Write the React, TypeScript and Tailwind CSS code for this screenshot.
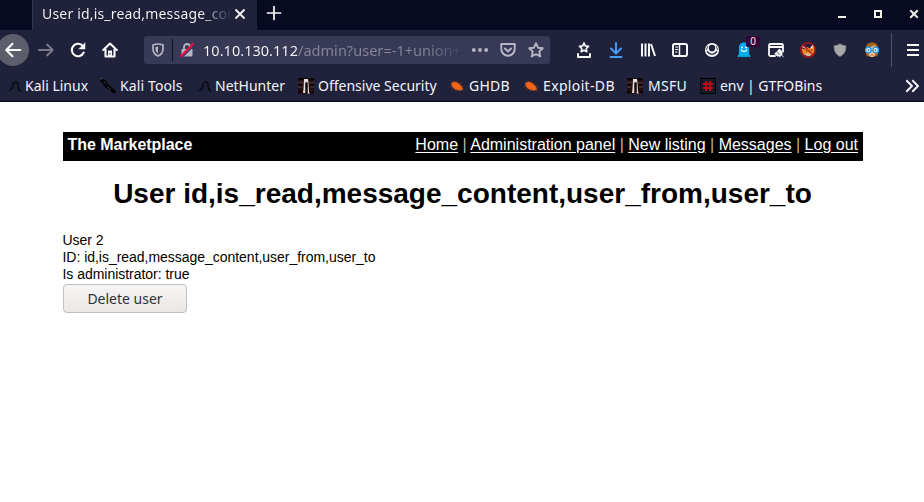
import type { ReactNode } from "react";

function Glyph({ children, size = 16, className = "" }: { children: ReactNode; size?: number; className?: string }) {
  return (
    <svg width={size} height={size} viewBox="0 0 16 16" fill="none" stroke="currentColor" strokeWidth="2" strokeLinecap="round" strokeLinejoin="round" className={`shrink-0 ${className}`}>
      {children}
    </svg>
  );
}

function Cell({ children, className = "text-[#f9f9fa]" }: { children: ReactNode; className?: string }) {
  return <div className={`flex w-8 shrink-0 items-center justify-center ${className}`}>{children}</div>;
}

const starPath = "M8 1.2l2.05 4.5 4.75.55-3.5 3.3.95 4.85L8 12l-4.25 2.4.95-4.85-3.5-3.3 4.75-.55z";

function KaliIcon() {
  return (
    <Glyph>
      <path d="M3.500 12.500c2.200-1 3.200-2.500 3.400-5C7.100 5 8.300 3.800 10 4.100c2 .4 2.500 2.400 2.200 4.400-.2 1.700.5 3 2 4.300" stroke="#0b0e17" strokeWidth="1.900" />
      <path d="M1 13.300l3-1.200M6 5.500l3-1.200" stroke="#15182a" strokeWidth="1" />
    </Glyph>
  );
}

function ToolsIcon() {
  return (
    <Glyph>
      <path d="M.5 1.500l3-.5 2.500 2 1.500 3 3 2 2.500 3 2.500 2-.5 2-3-1-3-3-3-1-2-3-3-3z" fill="#020304" stroke="#08090e" strokeWidth="1" />
      <path d="M4 4l1 1M8 9l2 2M.7 1l2-.3" stroke="#555866" strokeWidth=".8" />
    </Glyph>
  );
}

function StatueIcon() {
  return (
    <Glyph>
      <path d="M0 0h16v16H0z" fill="#220d10" stroke="none" />
      <path d="M0 4.500h5M11 4.500h5M0 9h4M12 9h4" stroke="#4b3134" strokeWidth="1.500" strokeLinecap="butt" />
      <path d="M0 1h16M0 7h4M12 7h4M0 14h3M13 14h3" stroke="#0d0507" strokeWidth="2" strokeLinecap="butt" />
      <path d="M6 1h4l.5 4 .5 9 1 1.500H9.500V4.500h-2V15H5l.5-4z" fill="#e4dfdb" stroke="none" />
      <path d="M7.500 4.500h2V15h-2z" fill="#110a0b" stroke="none" />
    </Glyph>
  );
}

function BugIcon() {
  return (
    <Glyph>
      <path d="M2 5.500l3-2 3.500 1 3.500 3 2.200 3.500-2.700 1.700-5-1L3.300 9z" fill="#f36517" stroke="none" />
      <path d="M4 5L2.500 3M7 5l1-2M10 6l2-1.500M3 8L1 9M5 10l-2 2M8 11l-1 2M12 8l3 .5M13 11l1 2" stroke="#8b3f25" strokeWidth=".7" />
    </Glyph>
  );
}

function HashIcon() {
  return (
    <Glyph>
      <path d="M.5.5h15v15H.5z" fill="#171a29" stroke="#020204" strokeWidth="1" />
      <path d="M6 3v10M10 3v10M3 6h10M3 10h10" stroke="#c00914" strokeWidth="1.900" strokeLinecap="butt" />
    </Glyph>
  );
}

const bookmarks = [
  { label: "Kali Linux", icon: <KaliIcon />, width: "w-[94px]", text: "-ml-px" },
  { label: "Kali Tools", icon: <ToolsIcon />, width: "w-[96px]", text: "tracking-[0.12px]" },
  { label: "NetHunter", icon: <KaliIcon />, width: "w-[102px]", text: "-ml-px" },
  { label: "Offensive Security", icon: <StatueIcon />, width: "w-[151px]", text: "" },
  { label: "GHDB", icon: <BugIcon />, width: "w-[74px]", text: "tracking-[0.25px]" },
  { label: "Exploit-DB", icon: <BugIcon />, width: "w-[104px]", text: "tracking-[0.35px]" },
  { label: "MSFU", icon: <StatueIcon />, width: "w-[73px]", text: "ml-px tracking-[0.25px]" },
  { label: "env | GTFOBins", icon: <HashIcon />, width: "w-[204px]", text: "tracking-[-0.06px]" },
];

function TabStrip() {
  return (
    <div className="flex h-[30px] bg-[#070a20] text-[#f9f9fa]">
      <div className="ml-8 flex w-[225px] shrink-0 items-center border-l border-[#343650] bg-[#20223c] pl-[9px]">
        <div className="w-[188px] overflow-hidden whitespace-nowrap bg-[linear-gradient(90deg,#f9f9fa_84%,transparent_101%)] bg-clip-text pb-[2px] text-[14px] leading-[20px] tracking-[0.18px] text-transparent">
          User id,is_read,message_content,user_from
        </div>
        <Glyph size={16} className="ml-[2px] -mt-[2px]"><path d="M4 4l8 8M12 4l-8 8" strokeWidth="1.800" /></Glyph>
      </div>
      <Glyph size={16} className="mt-[5px] ml-[9px]"><path d="M8 1.500v13M1.500 8h13" strokeWidth="1.700" /></Glyph>
      <div className="ml-auto flex text-[#f5f3ed]">
        <Glyph className="mt-[6px]"><path d="M4 11h8" strokeLinecap="butt" /></Glyph>
        <Glyph className="mt-[6px] ml-5"><path d="M5 5h6v6H5z" strokeLinejoin="miter" /></Glyph>
        <Glyph className="mt-[6px] ml-5 mr-[2px]"><path d="M5 5l6 6M11 5l-6 6" strokeLinecap="square" /></Glyph>
      </div>
    </div>
  );
}

function UrlField() {
  return (
    <div className="ml-[18px] flex h-7 w-[406px] shrink-0 items-center rounded-[3px] bg-[#373957] text-[#b5b6c4]">
      <Glyph className="ml-[6px]">
        <path d="M8 2c2 0 3.500.4 5 1v4c0 3.500-1.800 5.600-5 7-3.200-1.400-5-3.500-5-7V3c1.500-.6 3-1 5-1z" strokeWidth="1.700" />
        <path d="M8 4.500v7C6.200 10.400 5.500 9 5.500 7V5z" fill="currentColor" stroke="none" />
      </Glyph>
      <div className="ml-[6px] h-[22px] w-px bg-[#10121d]" />
      <Glyph className="ml-[6px]">
        <path d="M5 7V5a3 3 0 016 0v2" strokeWidth="1.800" />
        <path d="M2.500 7h11v6a1.500 1.500 0 01-1.500 1.500H4A1.500 1.500 0 012.500 13z" fill="currentColor" stroke="none" />
        <path d="M3 15L15 3" stroke="#373957" strokeWidth="2" />
        <path d="M2 14L14 2" stroke="#f70b44" strokeWidth="2" />
      </Glyph>
      <div className="ml-2 w-[262px] overflow-hidden whitespace-nowrap bg-[linear-gradient(90deg,#f9f9fa_94px,#85869a_94px,#85869a_222px,transparent_262px)] bg-clip-text text-[14.500px] leading-[20px] tracking-[0.03px] text-transparent">
        10.10.130.112/admin?user=-1+union+select
      </div>
      <Glyph size={18} className="ml-[6px]">
        <g fill="currentColor" stroke="none"><circle cx="2.500" cy="8" r="1.700" /><circle cx="8" cy="8" r="1.700" /><circle cx="13.500" cy="8" r="1.700" /></g>
      </Glyph>
      <Glyph className="ml-[11px]">
        <path d="M1.300 2h13.400v5a6.700 6.700 0 01-13.400 0z" strokeWidth="2" />
        <path d="M5 6.500l3 3 3-3" strokeWidth="2" />
      </Glyph>
      <Glyph className="ml-3"><path d={starPath} strokeWidth="1.900" /></Glyph>
    </div>
  );
}

function Extensions() {
  return (
    <>
      <Cell>
        <Glyph>
          <path d="M8 1l1.300 2.900 3.200.4-2.300 2.200.6 3.200L8 8.200 5.200 9.700l.6-3.200-2.300-2.200 3.200-.4z" strokeWidth="1.700" />
          <path d="M2 12v3h12v-3" strokeWidth="2" />
        </Glyph>
      </Cell>
      <Cell className="text-[#459fff]">
        <Glyph><path d="M8 1v10M3 6.500l5 5 5-5M2.500 15h11" strokeWidth="1.900" /></Glyph>
      </Cell>
      <Cell>
        <Glyph><path d="M2 1.500v13M5.500 1.500v13M9 1.500v13M11 2l4 12" strokeWidth="2" strokeLinecap="butt" /></Glyph>
      </Cell>
      <Cell>
        <Glyph>
          <rect x="1" y="2" width="14" height="12" rx="1.800" strokeWidth="2" />
          <path d="M7.500 2v12" strokeWidth="1.500" />
          <path d="M3.500 5h2.300M3.500 7.500h2.300M3.500 10h1.500" strokeWidth="1" />
        </Glyph>
      </Cell>
      <Cell>
        <Glyph>
          <circle cx="8" cy="8" r="7" fill="currentColor" stroke="none" />
          <path d="M8 2.800a3.100 3.100 0 00-3.100 3.100v.3a3.100 3.100 0 006.200 0v-.3A3.100 3.100 0 008 2.800z" fill="#20223c" stroke="none" />
          <path d="M3.300 9.700c1.200 1.900 2.800 2.700 4.700 2.700s3.500-.8 4.700-2.700" stroke="#20223c" strokeWidth="1.300" />
          <path d="M4 4.200a5.500 5.500 0 00-1.400 3.500M12 4.200a5.500 5.500 0 011.400 3.500" stroke="#20223c" strokeWidth=".8" />
          <circle cx="8" cy="6" r="2" fill="#20223c" stroke="none" />
        </Glyph>
      </Cell>
      <Cell className="relative text-[#00aef0]">
        <Glyph>
          <path d="M8 .5C4.500.5 3 2.800 3 6v5.500l-1.500 3 1.500.7 1.500-.7 1.500 1 2-1 2 1 1.500-1 1.500.7 1.500-.7-1.500-3V6c0-3.200-1.500-5.500-5-5.500z" fill="currentColor" stroke="none" />
          <circle cx="6" cy="5.500" r="1" fill="white" stroke="none" /><circle cx="10" cy="5.500" r="1" fill="white" stroke="none" />
          <path d="M5.200 8c.8 1.900 4.800 1.900 5.600 0" stroke="white" strokeWidth="1.200" />
        </Glyph>
        <span className="absolute -top-[6px] left-[18px] h-[11px] w-[14px] rounded-[2px] bg-[#370139] text-center text-[10px] leading-[11px] text-[#f0e6f2]">0</span>
      </Cell>
      <Cell>
        <Glyph>
          <path d="M7 14H2.500A1.500 1.500 0 011 12.500v-9A1.500 1.500 0 012.500 2h11A1.500 1.500 0 0115 3.500v6M1.500 5h13" strokeWidth="1.800" />
          <path d="M7 11.500L11.500 7l2.500 2.500v3L12.500 14H9.500zM13 12.500l2.300 2.500M11 13.500l1 1.500" fill="currentColor" strokeWidth=".9" />
          <path d="M8.800 9.500l3 3" stroke="#20223c" strokeWidth=".8" />
        </Glyph>
      </Cell>
      <Cell>
        <Glyph>
          <path d="M1.500 6L4 7.500 7 5l3 1.500L14 3l.5 6-2 4L8 14l-5-2z" fill="#f28b1f" stroke="none" />
          <path d="M2.500 4.500L5 6M11 6l2-2.500" stroke="#eedfce" strokeWidth="1.400" />
          <path d="M4 12.500l3-1.500 2 .5 3-1-1.500 3-2.500.7z" fill="#d6b8a0" stroke="none" />
          <path d="M6 8.500l1 .7M11 8.500l1-.7" stroke="#40202a" strokeWidth="1" />
          <circle cx="8" cy="8" r="7.200" stroke="#cb1017" strokeWidth="1.200" />
          <path d="M3 3l10 10" stroke="#cb1017" strokeWidth="1.300" />
        </Glyph>
      </Cell>
      <Cell>
        <Glyph>
          <path d="M8 2c1.800 1.100 3.800 1.700 5.800 1.700C13.800 9 12.500 12 8 14.500 3.500 12 2.200 9 2.200 3.700 4.200 3.700 6.200 3.100 8 2z" fill="#a8a8a8" stroke="#949496" strokeWidth=".7" />
        </Glyph>
      </Cell>
      <Cell>
        <Glyph>
          <path d="M2 6c0-4 3-5.500 6-5.500S14 2 14 6v7l-2 1.500H4L2 13z" fill="#a46520" stroke="none" />
          <path d="M4 5c3 .2 5-.5 6.500-2l1.500 2.500v6L9.500 15h-3L4 11.500z" fill="#f2ba91" stroke="none" />
          <circle cx="4.300" cy="8" r="2.800" fill="#ffffff" stroke="#2196e8" strokeWidth="1.400" />
          <circle cx="11.700" cy="8" r="2.800" fill="#ffffff" stroke="#2196e8" strokeWidth="1.400" />
          <circle cx="4.500" cy="8" r="1" fill="#2481c2" stroke="none" /><circle cx="11.500" cy="8" r="1" fill="#2481c2" stroke="none" />
          <path d="M7 13h2" stroke="#cf6f58" strokeWidth="1" />
        </Glyph>
      </Cell>
    </>
  );
}

function Toolbar() {
  return (
    <div className="flex h-10 items-center text-[#f9f9fa]">
      <div className="-ml-[3px] mr-px flex h-8 w-8 shrink-0 items-center justify-center rounded-full bg-[#5d5e6c]">
        <Glyph size={18}><path d="M14.500 8H2M7.500 2.500L2 8l5.500 5.500" strokeWidth="1.900" /></Glyph>
      </div>
      <Cell className="text-[#797a8a]"><Glyph><path d="M.8 8h14M9 2.500L14.800 8 9 13.500" strokeWidth="1.800" /></Glyph></Cell>
      <Cell>
        <Glyph><path d="M13.700 10.500A6.200 6.200 0 1113 4.300" strokeWidth="2.100" /><path d="M15 1v6H9z" fill="currentColor" strokeWidth=".5" /></Glyph>
      </Cell>
      <Cell>
        <Glyph>
          <path d="M1.200 8L8 1.500 14.800 8M3.500 7.500v7h9v-7" strokeWidth="2.100" />
          <path d="M6 8.500h4V14H6z" fill="currentColor" stroke="none" /><path d="M8 11v1.500" stroke="#20223c" strokeWidth="1" strokeLinecap="butt" />
        </Glyph>
      </Cell>
      <UrlField />
      <div className="w-[18px] shrink-0" />
      <Extensions />
      <div className="ml-[3px] h-[34px] w-px shrink-0 bg-[#505166]" />
      <Glyph className="ml-[13px]"><path d="M2 3h12M2 8h12M2 13h12" strokeLinecap="butt" /></Glyph>
    </div>
  );
}

function Bookmarks() {
  return (
    <div className="flex h-[31px] items-center pl-[6px] text-[14px] text-[#f4f4f7]">
      {bookmarks.map((bookmark) => (
        <div key={bookmark.label} className={`flex shrink-0 items-center gap-1 whitespace-nowrap ${bookmark.width}`}>
          {bookmark.icon}
          <span className={bookmark.text}>{bookmark.label}</span>
        </div>
      ))}
      <Glyph><path d="M3 3l5 5-5 5M9 3l5 5-5 5" strokeLinecap="square" /></Glyph>
    </div>
  );
}

const links = ["Home", "Administration panel", "New listing", "Messages", "Log out"];

export default function App() {
  return (
    <div className="h-[502px] w-[924px] overflow-hidden bg-white">
      <header className="h-[102px] border-b border-[#090b20] bg-[#20223c] font-['Noto_Sans',sans-serif]">
        <TabStrip />
        <Toolbar />
        <Bookmarks />
      </header>
      <main className="ml-[63px] w-[800px] pt-[30px] font-['Liberation_Sans',Arial,sans-serif] text-[14px] leading-[17px] text-black">
        <nav className="flex h-[29px] justify-between bg-black pr-[5px] pl-[4.500px] pt-[3px] text-[16px] leading-[19px] text-white">
          <b className="tracking-[-0.04px]">The Marketplace</b>
          <div>
            {links.map((link, index) => (
              <span key={link}>{index > 0 && <span className="text-[#b8b8b8]"> | </span>}<a className="underline underline-offset-2">{link}</a></span>
            ))}
          </div>
        </nav>
        <h1 className="mt-[17px] -ml-px whitespace-nowrap text-center text-[28px] leading-[32px] font-bold">User id,is_read,message_content,user_from,user_to</h1>
        <div className="mt-[22px] -ml-[0.500px] tracking-[-0.03px]">
          <p>User 2</p>
          <p>ID: id,is_read,message_content,user_from,user_to</p>
          <p>Is administrator: true</p>
        </div>
        <button className="mt-px flex h-[29px] w-[124px] items-center justify-center rounded-[4px] border border-[#c3beb8] bg-linear-to-b from-[#f6f5f4] to-[#eae8e6] font-['Noto_Sans',sans-serif] text-[14px] text-[#2e3436]">Delete user</button>
      </main>
    </div>
  );
}
